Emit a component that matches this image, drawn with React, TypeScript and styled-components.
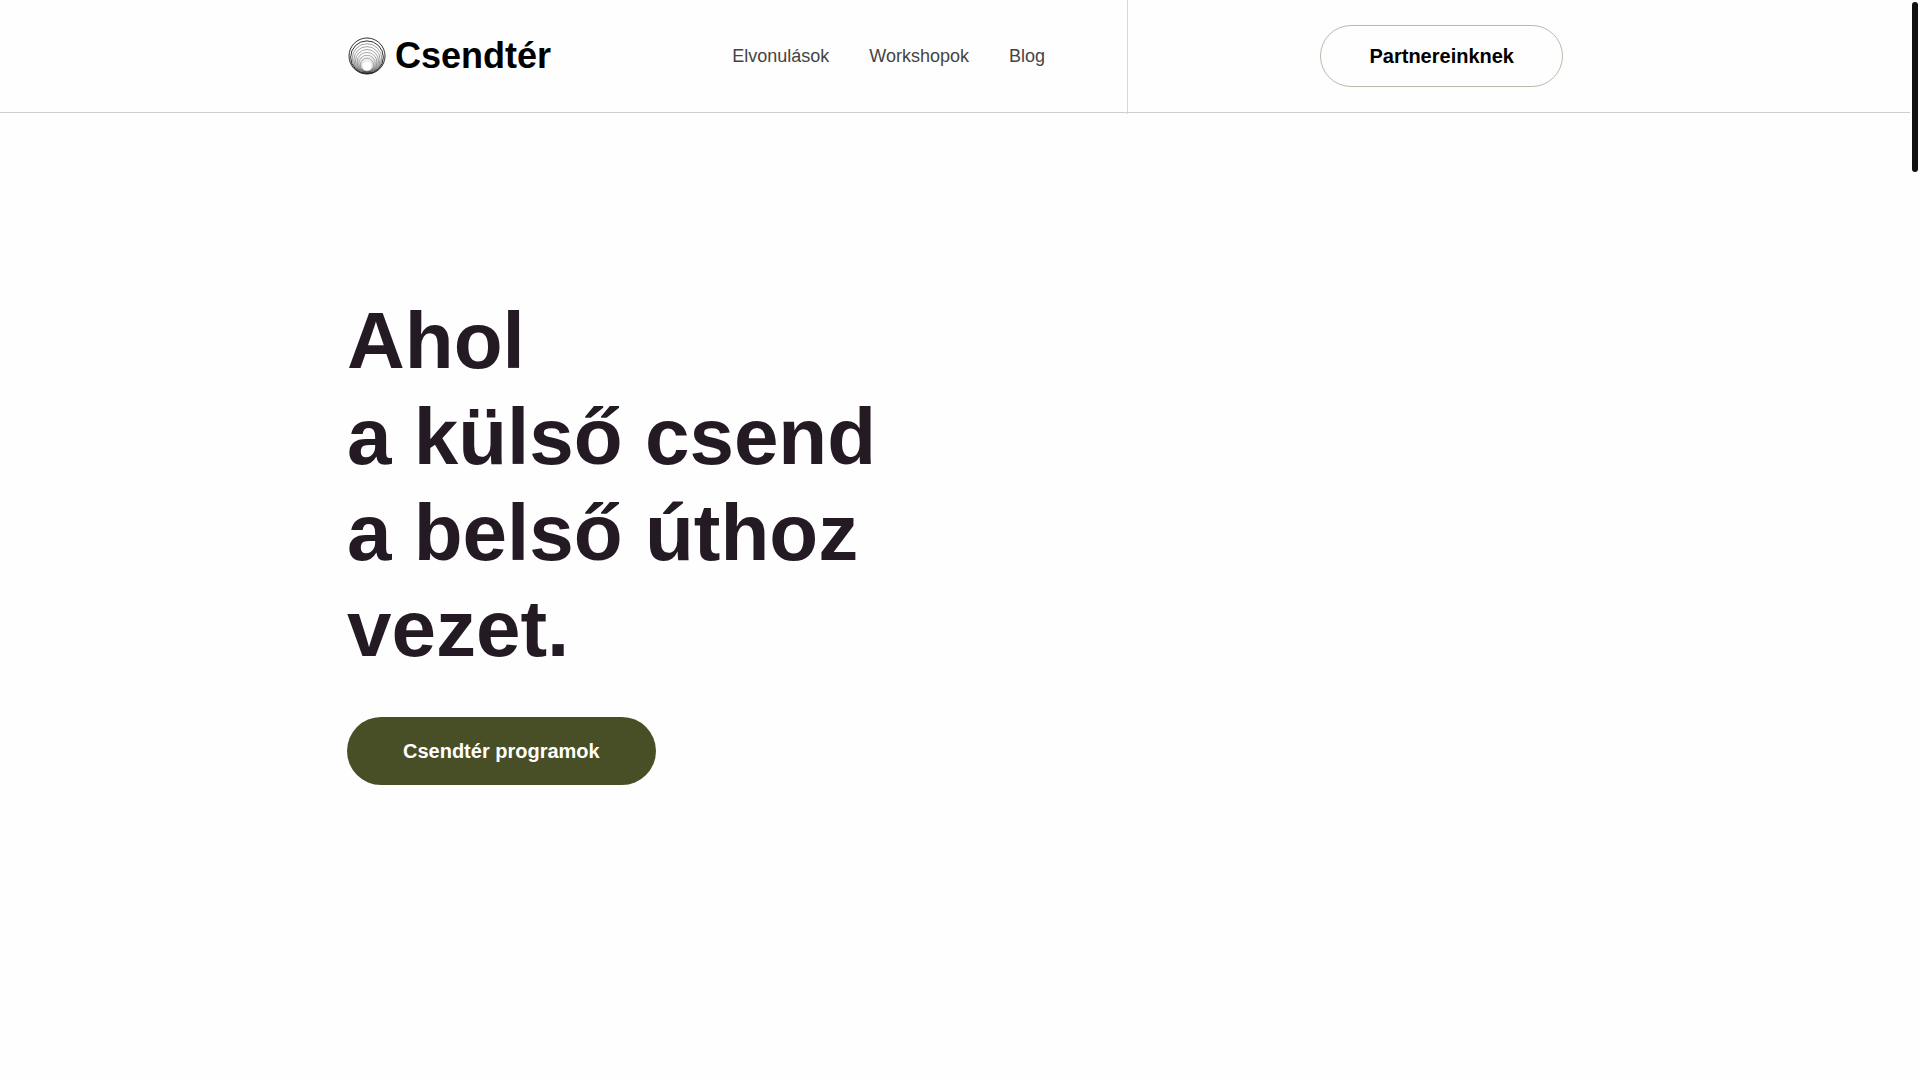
import React from "react";
import styled, { createGlobalStyle } from "styled-components";

const GlobalStyle = createGlobalStyle`
  *, *::before, *::after { box-sizing: border-box; }
  body {
    margin: 0;
    background: #fefefe;
    color: #000;
    font-family: "Liberation Sans", Arial, sans-serif;
  }
`;

const Page = styled.div`
  min-height: 100vh;
  padding-right: 10px;
`;

const Header = styled.header`
  border-bottom: 1px solid #cfcfcf;
`;

const Container = styled.div`
  max-width: 1280px;
  margin: 0 auto;
  padding: 0 32px;
`;

const HeaderRow = styled(Container)`
  display: grid;
  grid-template-columns: minmax(0, 781px) 1fr;
  height: 112px;
`;

const Primary = styled.div`
  display: flex;
  align-items: center;
  justify-content: space-between;
  margin-bottom: -2px;
  padding: 0 82px 2px 0;
  border-right: 1px solid #d6d6d6;
`;

const Secondary = styled.div`
  display: flex;
  align-items: center;
  justify-content: flex-end;
`;

const Brand = styled.a`
  display: flex;
  align-items: center;
  gap: 8px;
  color: #000;
  font-size: 36px;
  font-weight: 700;
  line-height: 40px;
  text-decoration: none;
`;

const Nav = styled.nav`
  display: flex;
  gap: 40px;
`;

const NavLink = styled.a`
  color: #444;
  font-size: 18px;
  line-height: 28px;
  text-decoration: none;
`;

const OutlineLink = styled.a`
  padding: 16px 48px;
  border: 1px solid #b9baa9;
  border-radius: 32px;
  color: #000;
  font-size: 20px;
  font-weight: 700;
  line-height: 28px;
  text-decoration: none;
`;

const Hero = styled(Container)`
  display: flex;
  flex-direction: column;
  align-items: flex-start;
  gap: 40px;
  padding-top: 180px;
  padding-bottom: 180px;
`;

const Title = styled.h1`
  margin: 0;
  color: #241a23;
  font-size: 80px;
  font-weight: 700;
  line-height: 96px;
`;

const PrimaryButton = styled.button`
  padding: 20px 56px;
  border: 0;
  border-radius: 36px;
  background: #484e25;
  color: #fff;
  font-family: inherit;
  font-size: 20px;
  font-weight: 700;
  line-height: 28px;
  cursor: pointer;
`;

const ScrollThumb = styled.div`
  position: fixed;
  top: 2px;
  right: 2px;
  width: 6px;
  height: 170px;
  border-radius: 3px;
  background: #101212;
`;

const RINGS = 8;

function LogoMark() {
  return (
    <svg width="40" height="40" viewBox="0 0 40 40" fill="none" aria-hidden="true">
      <defs>
        <linearGradient id="shade" x1="0" y1="0" x2="0" y2="1">
          <stop offset="0.45" stopColor="#222" stopOpacity="0" />
          <stop offset="1" stopColor="#222" stopOpacity="0.25" />
        </linearGradient>
      </defs>
      <circle cx="20" cy="20" r="18" fill="url(#shade)" />
      {Array.from({ length: RINGS }, (_, i) => {
        const t = i / RINGS;
        return (
          <circle
            key={i}
            cx="20"
            cy={20 + 10 * t}
            r={18 - 13 * t}
            stroke="#1c1c1c"
            strokeWidth={i < 2 ? 1 : 0.6}
            strokeOpacity={i < 2 ? 0.9 : 0.75 - 0.2 * t}
          />
        );
      })}
      <circle cx="20" cy="30" r="4.5" fill="#fff" />
      <path d="M5 30 A18 18 0 0 0 35 30 A17 14.5 0 0 1 5 30" fill="#222" fillOpacity="0.7" />
    </svg>
  );
}

export default function App() {
  return (
    <Page>
      <GlobalStyle />
      <Header>
        <HeaderRow>
          <Primary>
            <Brand href="#">
              <LogoMark />
              Csendtér
            </Brand>
            <Nav>
              <NavLink href="#elvonulasok">Elvonulások</NavLink>
              <NavLink href="#workshopok">Workshopok</NavLink>
              <NavLink href="#blog">Blog</NavLink>
            </Nav>
          </Primary>
          <Secondary>
            <OutlineLink href="#partnereinknek">Partnereinknek</OutlineLink>
          </Secondary>
        </HeaderRow>
      </Header>
      <main>
        <Hero>
          <Title>
            Ahol
            <br />a külső csend
            <br />a belső úthoz
            <br />
            vezet.
          </Title>
          <PrimaryButton type="button">Csendtér programok</PrimaryButton>
        </Hero>
      </main>
      <ScrollThumb />
    </Page>
  );
}
